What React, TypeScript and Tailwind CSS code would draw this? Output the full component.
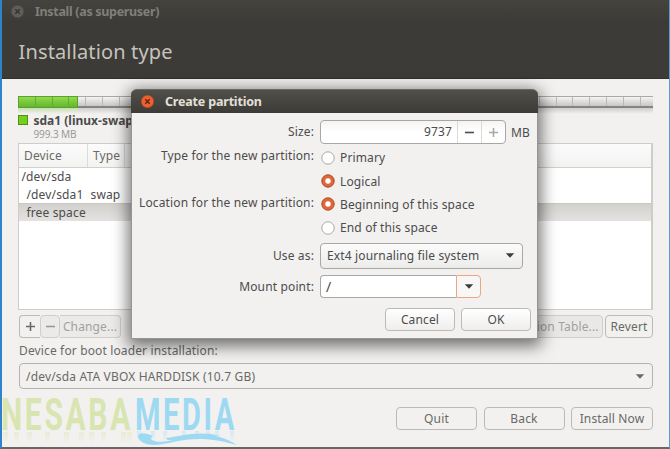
import React from "react";
import type { ReactNode } from "react";

function Label({ children, className = "" }: { children: ReactNode; className?: string }) {
  return <span className={`block whitespace-pre ${className}`}>{children}</span>;
}

function CloseIcon({ active = false }: { active?: boolean }) {
  return (
    <svg width="13" height="13" viewBox="0 0 13 13" className="block shrink-0">
      <circle cx="6.5" cy="6.5" r="6.2" fill={active ? "#ee5f2f" : "#5f5e59"} stroke={active ? "#b04a22" : "#4c4b47"} strokeWidth="0.6" />
      <path d="M4.3 4.3l4.4 4.4M8.7 4.3l-4.4 4.4" stroke={active ? "#5c2410" : "#35342f"} strokeWidth="1.4" />
    </svg>
  );
}

function Arrow({ className = "" }: { className?: string }) {
  return (
    <svg width="10" height="5" viewBox="0 0 10 5" className={`block shrink-0 ${className}`}>
      <path d="M0.8 0.2h8.4L5 4.8z" fill="currentColor" />
    </svg>
  );
}

function Sign({ plus = false, className = "" }: { plus?: boolean; className?: string }) {
  return (
    <svg width="9" height="9" viewBox="0 0 9 9" className={`block ${className}`}>
      <path d={plus ? "M0 4.5h9M4.5 0v9" : "M0 4.5h9"} stroke="currentColor" strokeWidth="1.6" />
    </svg>
  );
}

function Button({ children, className = "" }: { children: ReactNode; className?: string }) {
  return (
    <button className={`flex shrink-0 items-center justify-center rounded-[4px] border tracking-[0.14px] ${className}`}>{children}</button>
  );
}

function Radio({ checked = false, label, className = "" }: { checked?: boolean; label: string; className?: string }) {
  return (
    <div className="flex h-[23.4px] items-center gap-[5px]">
      <svg width="14" height="14" viewBox="0 0 14 14" className="block shrink-0">
        <circle cx="7" cy="7" r="6.2" fill={checked ? "#e0673a" : "#fff"} stroke={checked ? "#a94a24" : "#aaa8a5"} />
        {checked && <circle cx="7" cy="7" r="2.7" fill="#fff" />}
      </svg>
      <Label className={className}>{label}</Label>
    </div>
  );
}

function Dialog() {
  return (
    <div className="absolute left-[129px] top-[89px] flex h-[250px] w-[407px] flex-col rounded-t-[6px] border border-[#969592] bg-[#f2f1f0] shadow-[0_4px_16px_3px_rgba(0,0,0,0.55)]">
      <div className="-mx-px -mt-px flex h-6 shrink-0 items-center gap-[11px] rounded-t-[6px] border-t border-[#6a6964] bg-linear-to-b from-[#504f49] to-[#3c3b37] pl-[10px]">
        <CloseIcon active />
        <Label className="text-[12.5px] font-bold tracking-[-0.18px] text-[#e4e0d8]">Create partition</Label>
      </div>
      <div className="grid grid-cols-[182px_1fr] gap-x-[6px] pt-[7px] text-[#4c4c4c]">
        <Label className="pt-[3px] text-right">Size:</Label>
        <div className="flex items-center">
          <div className="flex h-6 w-[186px] items-stretch rounded-[4px] border border-[#a9a7a4] bg-linear-to-b from-[#f4f4f3] via-white to-white">
            <Label className="flex-1 pr-[5px] pt-[2px] text-right">9737</Label>
            <div className="flex w-6 items-center justify-center border-l border-[#dcdad8]"><Sign /></div>
            <div className="flex w-6 items-center justify-center border-l border-[#dcdad8] text-[#aaa9a6]"><Sign plus /></div>
          </div>
          <Label className="ml-[5px]">MB</Label>
        </div>
        <Label className="pt-[3px] text-right">Type for the new partition:</Label>
        <div className="pl-[1px] pt-[2px]">
          <Radio label="Primary" />
          <Radio label="Logical" checked />
        </div>
        <Label className="pt-[1px] text-right">Location for the new partition:</Label>
        <div className="pl-[1px]">
          <Radio label="Beginning of this space" checked />
          <Radio label="End of this space" />
        </div>
        <Label className="pt-[7px] text-right">Use as:</Label>
        <div className="mt-[3px] flex h-[26px] w-[203px] items-center justify-between rounded-[4px] border border-[#a9a7a4] bg-linear-to-b from-[#fbfbfb] to-[#ececeb] pl-[6px] pr-[7px]">
          <Label>Ext4 journaling file system</Label>
          <Arrow className="text-[#3c3c3c]" />
        </div>
        <Label className="pt-[9px] text-right">Mount point:</Label>
        <div className="mt-[6px] flex h-[23px] w-[161px]">
          <div className="flex-1 rounded-l-[4px] border border-r-0 border-[#a9a7a4] bg-white pl-[5px] pt-[2px]"><Label className="text-[14px]">/</Label></div>
          <div className="flex w-[25px] items-center justify-center rounded-r-[4px] border border-[#e8a882] bg-[#f8f7f6]"><Arrow className="text-[#3c3c3c]" /></div>
        </div>
      </div>
      <div className="mt-[10px] flex justify-end gap-[6px] pr-[6px] text-[#4c4c4c]">
        <Button className="h-[23px] w-[70px] border-[#bcbab7] bg-linear-to-b from-white to-[#efeeed]">Cancel</Button>
        <Button className="h-[23px] w-[70px] border-[#bcbab7] bg-linear-to-b from-white to-[#efeeed]">OK</Button>
      </div>
    </div>
  );
}

const greenStems = [3, 14, 27, 45, 64, 79, 89, 101, 121, 127];
const blueStems = [137, 151, 163, 182, 195, 206, 215, 230];

function Watermark() {
  return (
    <svg width="250" height="64" viewBox="0 0 250 64" className="absolute -left-[2px] top-[384px]">
      <defs>
        <linearGradient id="green" x1="0" y1="0" x2="0" y2="1">
          <stop offset="0" stopColor="#d8e5b1" stopOpacity="0.4" />
          <stop offset="1" stopColor="#d8e5b1" stopOpacity="0" />
        </linearGradient>
        <linearGradient id="blue" x1="0" y1="0" x2="0" y2="1">
          <stop offset="0" stopColor="#9dd9f2" stopOpacity="0.35" />
          <stop offset="1" stopColor="#9dd9f2" stopOpacity="0" />
        </linearGradient>
      </defs>
      {greenStems.map((x) => <rect key={x} x={x} y="48" width="5" height="12" fill="url(#green)" />)}
      {blueStems.map((x) => <rect key={x} x={x} y="47" width="4" height="11" fill="url(#blue)" />)}
      <g fontFamily="Roboto, sans-serif" fontWeight="700" fontSize="44.5" letterSpacing="4">
        <text x="1" y="46" textLength="132" lengthAdjust="spacingAndGlyphs" fill="#d8e5b1">NESABA</text>
        <text x="135" y="45.5" textLength="102" lengthAdjust="spacingAndGlyphs" fill="#9dd9f2">MEDIA</text>
      </g>
      <path d="M147 50c-7-2-11 1-8 5 4 6 14 7 24 5 20-3 34-10 74 1-24-15-43-10-60-6-11 3-20 4-25 1-2-2 0-3 1-4-2-1-4-2-6-2z" fill="#9dd9f2" />
      <path d="M166 54c16-2 32-8 56-2-20-1-32 3-46 4-6 1-10 0-10-2z" fill="#9dd9f2" />
    </svg>
  );
}

const rowClass = "flex h-[17.5px] items-center";

export default function App() {
  return (
    <div className="relative flex h-[449px] w-[670px] flex-col overflow-hidden border-b-2 border-l-2 border-r border-b-[#686765] border-l-[#2f83cc] border-r-[#5b9bd0] bg-[#f2f1f0] font-['Noto_Sans','Open_Sans',sans-serif] text-[12px] leading-[17px] tracking-[0.14px] text-[#6a6966]">
      <header className="h-[79px] shrink-0 border-b border-[#302f2c] bg-[#3c3b37]">
        <div className="flex h-[22px] items-center gap-[11px] bg-linear-to-b from-[#44433e] to-[#3c3b37] pl-[9px]">
          <CloseIcon />
          <Label className="text-[12.5px] font-bold tracking-[-0.32px] text-[#807f79]">Install (as superuser)</Label>
        </div>
        <Label className="pl-[16.5px] pt-[16px] text-[20px] leading-[28px] text-[#c6c3bd]">Installation type</Label>
      </header>
      <main className="flex flex-col pl-[16px] pr-[16px] pt-[17px]">
        <div className="flex h-[12px]">
          <div className="h-full w-[60px] border border-[#609f2e] bg-linear-to-b from-[#8fdc4c] to-[#63b62c]">
            <div className="h-full bg-[repeating-linear-gradient(90deg,transparent_0px,transparent_15.8px,#65a83c_15.8px,#65a83c_16.8px)]" />
          </div>
          <div className="h-full flex-1 border-b-2 border-t border-b-[#858482] border-t-[#aaa9a7] bg-linear-to-b from-[#f4f4f4] to-[#c8c7c6]">
            <div className="h-full bg-[repeating-linear-gradient(90deg,transparent_0px,transparent_7.3px,#bab9b7_7.3px,#bab9b7_8.3px,transparent_8.3px,transparent_16.8px)]" />
          </div>
        </div>
        <div className="flex h-[6px]">
          <div className="w-[60px] bg-linear-to-b from-[#c4dfb0] to-[#f2f1f0]" />
          <div className="flex-1 bg-linear-to-b from-[#cfcecd] to-[#f2f1f0]" />
        </div>
        <div className="flex h-[29px] gap-[5.5px]">
          <div className="mt-[1px] size-[10px] border border-[#4f8c26] bg-[#73d216]" />
          <div>
            <Label className="font-bold leading-[14px] tracking-[0px] text-[#4c4c4c]">sda1 (linux-swap)</Label>
            <Label className="text-[10px] leading-[13px] tracking-[-0.1px] text-[#9a9996]">999.3 MB</Label>
          </div>
        </div>
        <div className="flex h-[167px] flex-col border border-r-2 border-[#cfcdca] bg-white">
          <div className="flex h-[24px] shrink-0 items-center border-b border-[#d2d0ce] bg-linear-to-b from-[#fbfbfb] to-[#f3f3f2]">
            <Label className="flex h-full w-[69px] items-center border-r border-[#dddbd9] pl-[5px]">Device</Label>
            <Label className="flex h-full w-[37px] items-center border-r border-[#dddbd9] pl-[5px]">Type</Label>
          </div>
          <div className={`${rowClass} pl-[2.5px] text-[#4c4c4c]`}>/dev/sda</div>
          <div className={`${rowClass} pl-[7.5px] text-[#4c4c4c]`}><Label className="w-[64px]">/dev/sda1</Label><Label>swap</Label></div>
          <div className="flex h-[18px] items-center border-t border-[#cac8c5] bg-linear-to-b from-[#d3d1ce] to-[#e4e2e0] pl-[7.5px] text-[#4c4c4c]">free space</div>
        </div>
        <div className="mt-[5px] flex h-[23px] justify-between pl-[1px]">
          <div className="flex">
            <Button className="w-[21px] rounded-r-none border-r-0 border-[#bcbab7]"><Sign plus /></Button>
            <Button className="w-[20px] border-[#d0cecb] bg-[#ebeae8] text-[#9a9996]"><Sign /></Button>
            <Button className="w-[61px] rounded-l-none border-l-0 border-[#d0cecb] bg-[#ebeae8] text-[#a3a19e]">Change...</Button>
          </div>
          <div className="flex gap-[2px]">
            <Button className="w-[131px] border-[#d0cecb] bg-[#e9e8e6] text-[#a3a19e]">New Partition Table...</Button>
            <Button className="w-[48px] border-[#bcbab7]">Revert</Button>
          </div>
        </div>
        <Label className="mt-[4px] pl-[1px]">Device for boot loader installation:</Label>
        <div className="ml-[1px] mt-[4px] flex h-[26px] items-center justify-between rounded-[4px] border border-[#b5b3b0] pl-[6px] pr-[7px]">
          <Label className="tracking-[0.17px]">/dev/sda ATA VBOX HARDDISK (10.7 GB)</Label>
          <Arrow />
        </div>
        <div className="mt-[18px] flex h-[23px] justify-end gap-[6.5px]">
          <Button className="w-[81px] border-[#bcbab7]">Quit</Button>
          <Button className="w-[81px] border-[#bcbab7]">Back</Button>
          <Button className="w-[82px] border-[#bcbab7]">Install Now</Button>
        </div>
      </main>
      <Watermark />
      <Dialog />
    </div>
  );
}
